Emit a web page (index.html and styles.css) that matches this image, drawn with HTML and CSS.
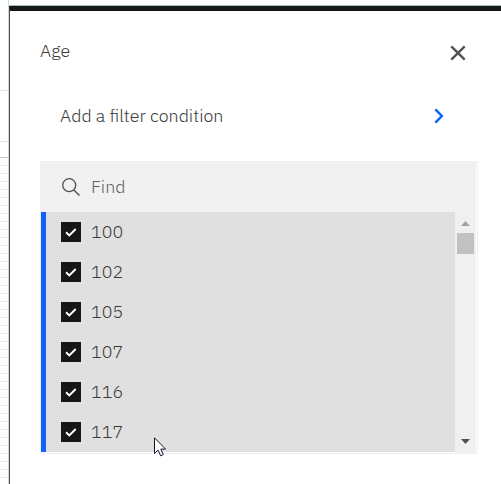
FILE: index.html
```html
<!DOCTYPE html>
<html lang="en">
<head>
<meta charset="utf-8">
<title>Age filter</title>
<link rel="stylesheet" href="styles.css">
</head>
<body>
<div class="screen">
  <div class="topline"></div>
  <aside class="sheet"><div class="row-a"></div><div class="row-b"></div><div class="row-c"></div><div class="stripes"></div></aside>
  <main class="panel">
    <header class="header">
      <h1 class="title">Age</h1>
      <svg class="close" viewBox="0 0 16 16"><path d="M1.3 1.3 14.7 14.7M14.7 1.3 1.3 14.7" fill="none" stroke="#525252" stroke-width="2.4"/></svg>
    </header>
    <div class="condition">
      <span class="condition-text">Add a filter condition</span>
      <svg class="chevron" viewBox="0 0 10 16"><path d="M1.4 1.4 7.8 8 1.4 14.6" fill="none" stroke="#0f62fe" stroke-width="2.5"/></svg>
    </div>
    <section class="picker">
      <div class="search">
        <svg class="search-icon" viewBox="0 0 20 20"><circle cx="8.2" cy="8.2" r="6.5" fill="none" stroke="#525252" stroke-width="1.3"/><path d="m12.9 12.9 5.6 5.6" stroke="#525252" stroke-width="1.4"/></svg>
        <span class="find">Find</span>
      </div>
      <div class="list">
        <ul class="options">
          <li class="option"><span class="box"><svg viewBox="0 0 20 20"><path d="m5.1 10.2 3.2 3.2 6.4-6.4" fill="none" stroke="#fff" stroke-width="2"/></svg></span><span class="value">100</span></li>
          <li class="option"><span class="box"><svg viewBox="0 0 20 20"><path d="m5.1 10.2 3.2 3.2 6.4-6.4" fill="none" stroke="#fff" stroke-width="2"/></svg></span><span class="value">102</span></li>
          <li class="option"><span class="box"><svg viewBox="0 0 20 20"><path d="m5.1 10.2 3.2 3.2 6.4-6.4" fill="none" stroke="#fff" stroke-width="2"/></svg></span><span class="value">105</span></li>
          <li class="option"><span class="box"><svg viewBox="0 0 20 20"><path d="m5.1 10.2 3.2 3.2 6.4-6.4" fill="none" stroke="#fff" stroke-width="2"/></svg></span><span class="value">107</span></li>
          <li class="option"><span class="box"><svg viewBox="0 0 20 20"><path d="m5.1 10.2 3.2 3.2 6.4-6.4" fill="none" stroke="#fff" stroke-width="2"/></svg></span><span class="value">116</span></li>
          <li class="option"><span class="box"><svg viewBox="0 0 20 20"><path d="m5.1 10.2 3.2 3.2 6.4-6.4" fill="none" stroke="#fff" stroke-width="2"/></svg></span><span class="value">117</span></li>
        </ul>
        <div class="scrollbar">
          <svg class="arrow" viewBox="0 0 9 5"><path d="M0 5 4.5 0 9 5z" fill="#a3a3a3"/></svg>
          <div class="thumb"></div>
          <svg class="arrow arrow-down" viewBox="0 0 9 5"><path d="M0 0h9L4.5 5z" fill="#505050"/></svg>
        </div>
      </div>
    </section>
  </main>
  <svg class="cursor" viewBox="0 0 13 20"><path d="M.5.8v15.6l3.6-3.3 2.5 5.7 2.7-1.2-2.5-5.5h4.7z" fill="#fff" stroke="#15152a" stroke-width="1"/></svg>
</div>
</body>
</html>
```
FILE: styles.css
```css
* { box-sizing: border-box; }
body { margin: 0; background: #fff; color: #393939; font: 300 17.85px/24px "IBM Plex Sans", Roboto, "Liberation Sans", sans-serif; }
svg { display: block; flex: none; }
.screen { position: relative; width: 501px; height: 484px; overflow: hidden; display: grid; grid-template-columns: 9px 1fr; grid-template-rows: 6px 1fr; }
.topline { grid-column: 2; grid-row: 1; border-bottom: 1px solid #a9bdb3; }
.sheet { grid-column: 1; grid-row: 1 / 3; border-right: 1px solid #cddbd6; overflow: hidden; }
.row-a { height: 91px; border-bottom: 1px solid #e2e2e2; }
.row-b { height: 51px; border-bottom: 1px solid #e2e2e2; }
.row-c { height: 16px; border-bottom: 1px solid #c6c6c6; }
.stripes { height: 326px; background: repeating-linear-gradient(#fff 0 7px, #ececec 7px 8px); }
.panel { grid-column: 2; grid-row: 2; border-top: 5px solid #141815; border-left: 1px solid #4a4f4d; padding: 28px 23px 30px 30px; background: #fff; }
.header { display: flex; justify-content: space-between; height: 65px; padding-right: 12px; }
.title { margin: 0; font: inherit; }
.close { width: 16px; height: 16px; margin-top: 6px; }
.condition { display: flex; justify-content: space-between; height: 57px; padding: 0 34px 0 20px; }
.chevron { width: 10px; height: 16px; margin-top: 4px; }
.picker { width: 438px; height: 293px; border: 1px solid #f0f0f0; padding: 0 1px 1px 0; }
.search { display: flex; align-items: center; height: 50px; padding: 0 20px; background: #f1f1f1; }
.search-icon { width: 20px; height: 20px; margin-right: 10px; }
.find { color: #5f5f5f; }
.list { display: flex; height: 240px; }
.options { flex: 1; margin: 0; padding: 0; list-style: none; background: #e0e0e0; border-left: 5px solid #0f62fe; }
.option { display: flex; align-items: center; height: 40px; padding-left: 15px; }
.box { width: 20px; height: 20px; margin-right: 10px; background: #161616; }
.scrollbar { display: flex; flex-direction: column; align-items: center; width: 21px; height: 241px; background: #f0f0f0; padding: 9px 2px; }
.arrow { width: 9px; height: 5px; }
.thumb { width: 17px; height: 21px; margin-top: 7px; background: #c1c1c1; }
.arrow-down { margin-top: auto; }
.cursor { position: absolute; left: 154px; top: 437px; width: 13px; height: 20px; }
```
